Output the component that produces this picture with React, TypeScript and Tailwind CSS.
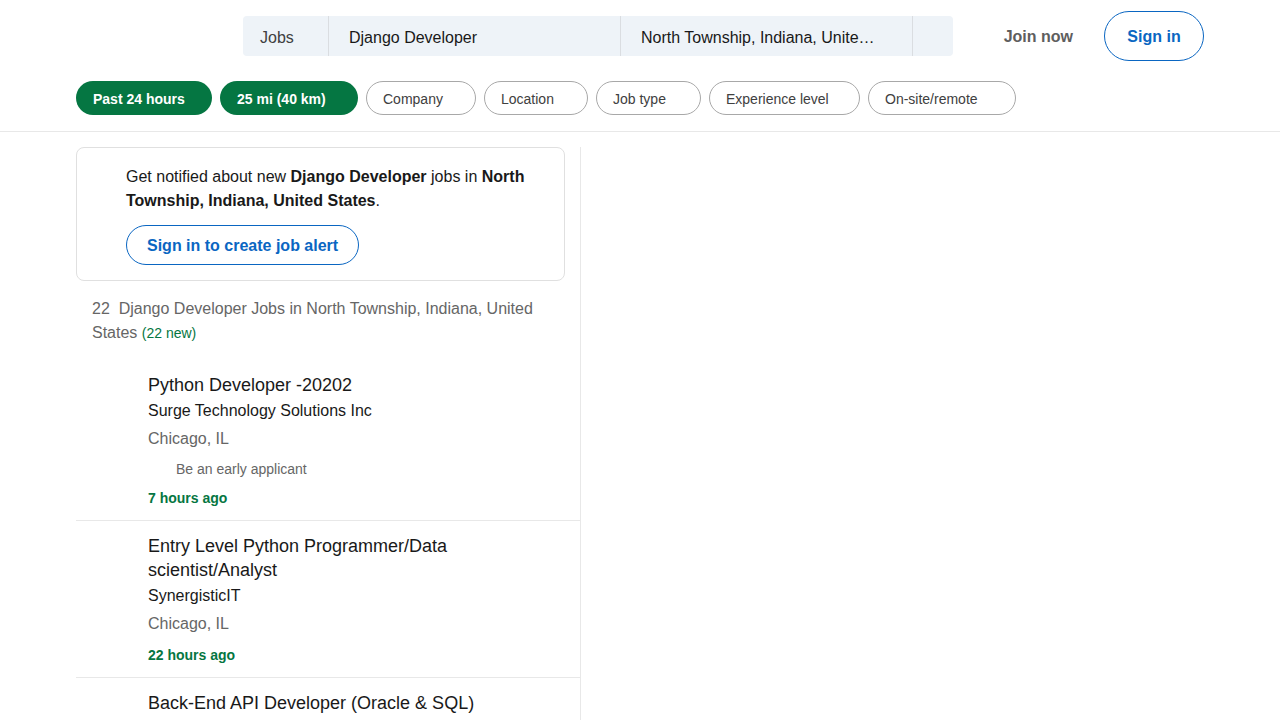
import React from "react";

type Job = {
  title: string;
  company: string;
  location: string;
  benefit?: string;
  posted: string;
};

const jobs: Job[] = [
  {
    title: "Python Developer -20202",
    company: "Surge Technology Solutions Inc",
    location: "Chicago, IL",
    benefit: "Be an early applicant",
    posted: "7 hours ago",
  },
  {
    title: "Entry Level Python Programmer/Data scientist/Analyst",
    company: "SynergisticIT",
    location: "Chicago, IL",
    posted: "22 hours ago",
  },
  {
    title: "Back-End API Developer (Oracle & SQL)",
    company: "Oracle",
    location: "Chicago, IL",
    posted: "1 day ago",
  },
];

const filters = [
  { label: "Past 24 hours", active: true, w: "w-[136px]" },
  { label: "25 mi (40 km)", active: true, w: "w-[138px]" },
  { label: "Company", active: false, w: "w-[110px]" },
  { label: "Location", active: false, w: "w-[104px]" },
  { label: "Job type", active: false, w: "w-[105px]" },
  { label: "Experience level", active: false, w: "w-[151px]" },
  { label: "On-site/remote", active: false, w: "w-[148px]" },
];

const Header = () => {
  return (
    <header className="h-[72px] px-[76px] flex items-center">
      <div className="w-[167px] shrink-0" />
      <div className="flex h-10 w-[710px] rounded bg-[#eef3f8] text-base text-[#191919]">
        <div className="w-[86px] flex items-center pl-[17px] pt-1 text-[#404040] border-r border-[#dadde1]">
          Jobs
        </div>
        <div className="w-[292px] flex items-center pl-5 pt-1 border-r border-[#dadde1]">
          Django Developer
        </div>
        <div className="w-[292px] flex items-center pl-5 pt-1 border-r border-[#dadde1]">
          <span className="block w-[238px] truncate">
            North Township, Indiana, United States
          </span>
        </div>
        <div className="flex-1" />
      </div>
      <div className="flex-1" />
      <button className="px-3 h-10 pt-[2px] text-base font-semibold text-[#5e5e5e] mr-[19px]">
        Join now
      </button>
      <button className="w-[100px] h-[50px] pt-[2px] rounded-full border border-[#0a66c2] text-[#0a66c2] text-base font-semibold">
        Sign in
      </button>
    </header>
  );
};

const Filters = () => {
  return (
    <div className="px-[76px] pt-[9px] pb-4 border-b border-[#e8e8e8] flex gap-2">
      {filters.map((f) => (
        <button
          key={f.label}
          className={
            f.active
              ? `${f.w} h-[34px] pt-[2px] rounded-full bg-[#057642] text-white text-sm font-semibold text-left pl-[17px]`
              : `${f.w} h-[34px] pt-[2px] rounded-full border border-[#a8a8a8] text-[#404040] text-sm text-left pl-4`
          }
        >
          {f.label}
        </button>
      ))}
    </div>
  );
};

const JobCard = ({ job, last }: { job: Job; last: boolean }) => {
  return (
    <li
      className={
        last
          ? "pl-[72px] pr-4 pt-[13px] pb-3"
          : "pl-[72px] pr-4 pt-[13px] pb-3 border-b border-[#e8e8e8]"
      }
    >
      <h3 className="text-lg leading-6 text-[#191919] font-medium">{job.title}</h3>
      <h4 className="mt-[2px] text-base leading-6 text-[#191919]">{job.company}</h4>
      <div className="mt-1 text-base leading-6 text-[#666]">{job.location}</div>
      {job.benefit && (
        <div className="mt-2 pl-7 text-sm leading-5 text-[#666]">{job.benefit}</div>
      )}
      <div className="mt-[9px] text-sm leading-5 font-bold text-[#057642]">
        {job.posted}
      </div>
    </li>
  );
};

const App = () => {
  return (
    <div
      className="min-h-screen bg-white"
      style={{ fontFamily: '"Liberation Sans", Arial, sans-serif' }}
    >
      <Header />
      <Filters />
      <main className="px-[76px] pt-[15px] flex">
        <section className="w-[505px] border-r border-[#e8e8e8] min-h-[580px]">
          <div className="w-[489px] rounded-lg border border-[#e0e0e0] pl-[49px] pr-6 pt-[17px] pb-[15px]">
            <p className="text-base leading-6 text-[#191919]">
              Get notified about new <strong className="font-bold">Django Developer</strong>{" "}
              jobs in <strong className="font-bold">North Township, Indiana, United States</strong>.
            </p>
            <button className="mt-3 h-10 px-5 pt-[2px] rounded-full border border-[#0a66c2] text-[#0a66c2] text-base font-semibold">
              Sign in to create job alert
            </button>
          </div>
          <h1 className="mt-4 pl-4 pr-8 text-base leading-6 text-[#666]">
            22 &nbsp;Django Developer Jobs in North Township, Indiana, United States{" "}
            <span className="text-sm text-[#057642]">(22 new)</span>
          </h1>
          <ul className="mt-[15px]">
            {jobs.map((job, i) => (
              <JobCard key={job.title} job={job} last={i === jobs.length - 1} />
            ))}
          </ul>
        </section>
      </main>
    </div>
  );
};

export default App;
